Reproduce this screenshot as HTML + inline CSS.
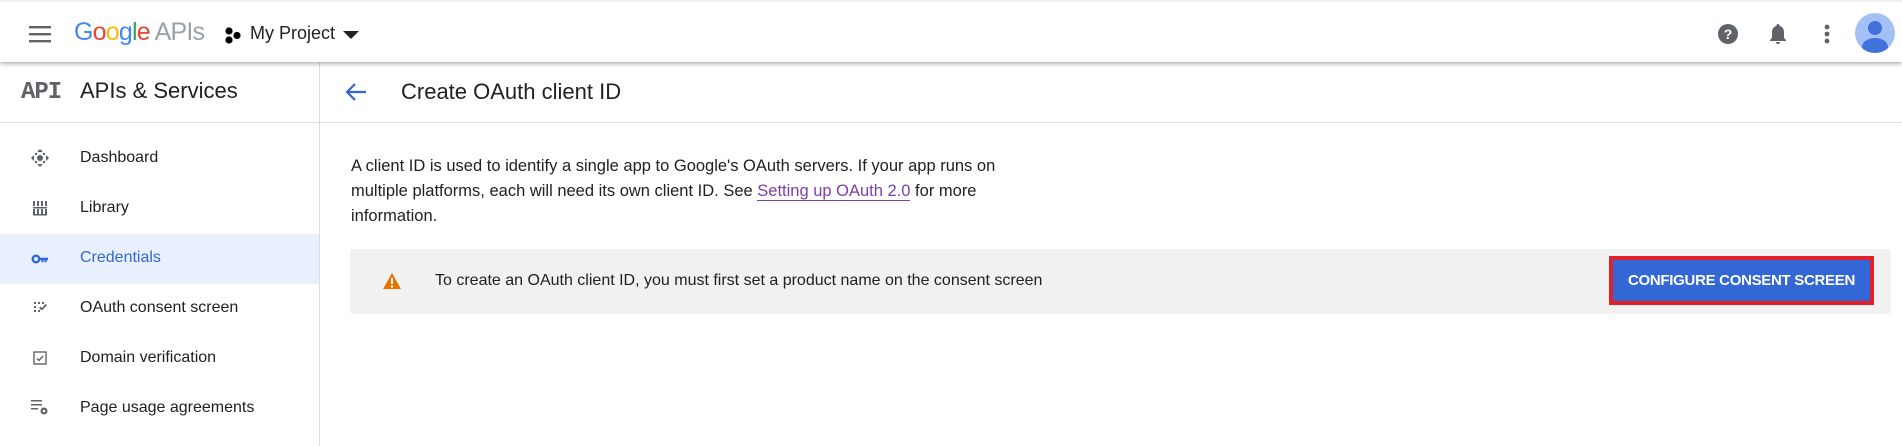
<!DOCTYPE html>
<html><head><meta charset="utf-8"><style>
*{margin:0;padding:0;box-sizing:border-box}
body{width:1902px;height:446px;overflow:hidden;background:#fff;font-family:"Liberation Sans",Arial,sans-serif;color:#202124;position:relative}
.abs{position:absolute}
.hdr{left:0;top:0;width:1902px;height:62px;background:#fff;box-shadow:0 2px 4px rgba(0,0,0,.3);z-index:5;border-top:2px solid #f1f1f1}
.nav{font-size:16px;left:80px;line-height:20px}
.ic{left:30px;width:20px;height:20px}
</style></head><body>
<div class="abs hdr">
  <svg class="abs" style="left:28px;top:22px" width="24" height="20" viewBox="0 0 24 20"><rect x="1" y="2" width="22" height="2.4" fill="#5f6368"/><rect x="1" y="9" width="22" height="2.4" fill="#5f6368"/><rect x="1" y="16" width="22" height="2.4" fill="#5f6368"/></svg>
  <div class="abs" style="left:74px;top:15px;font-size:25px;letter-spacing:-0.8px;line-height:30px"><span style="color:#4285f4">G</span><span style="color:#ea4335">o</span><span style="color:#fbbc05">o</span><span style="color:#4285f4">g</span><span style="color:#34a853">l</span><span style="color:#ea4335">e</span><span style="color:#9aa0a6"> APIs</span></div>
  <svg class="abs" style="left:224px;top:24px" width="20" height="20" viewBox="0 0 20 20"><circle cx="5" cy="5" r="3.6" fill="#000"/><circle cx="5" cy="14" r="3.6" fill="#000"/><circle cx="13" cy="9.5" r="3.6" fill="#000"/></svg>
  <div class="abs" style="left:250px;top:21px;font-size:18px;color:#202124">My Project</div>
  <svg class="abs" style="left:342px;top:28px" width="18" height="10"><path d="M1 1h16l-8 8z" fill="#202124"/></svg>
  <svg class="abs" style="left:1717px;top:21px" width="22" height="22" viewBox="0 0 22 22"><circle cx="11" cy="11" r="10" fill="#5f6368"/><text x="11" y="16" font-size="14" font-weight="bold" fill="#fff" text-anchor="middle" font-family="Liberation Sans">?</text></svg>
  <svg class="abs" style="left:1768px;top:20px" width="20" height="24" viewBox="0 0 20 24"><path d="M10 2c-1 0-1.5.6-1.5 1.4v.5C5.6 4.7 4 7.2 4 10v6l-2 2v1h16v-1l-2-2v-6c0-2.8-1.6-5.3-4.5-6.1v-.5C11.5 2.6 11 2 10 2zM8 20a2 2 0 004 0z" fill="#5f6368"/></svg>
  <svg class="abs" style="left:1819px;top:21px" width="16" height="22"><circle cx="8" cy="4" r="2.4" fill="#5f6368"/><circle cx="8" cy="11" r="2.4" fill="#5f6368"/><circle cx="8" cy="18" r="2.4" fill="#5f6368"/></svg>
  <svg class="abs" style="left:1855px;top:11px" width="40" height="40" viewBox="0 0 40 40"><defs><clipPath id="c"><circle cx="20" cy="20" r="20"/></clipPath></defs><circle cx="20" cy="20" r="20" fill="#a3c1f7"/><g clip-path="url(#c)" fill="#3f73db"><circle cx="20" cy="15" r="7"/><ellipse cx="20" cy="34" rx="13" ry="9"/></g></svg>
</div>

<div class="abs" style="left:319px;top:62px;width:1px;height:384px;background:#dadce0"></div>
<div class="abs" style="left:0;top:122px;width:1902px;height:1px;background:#dadce0"></div>
<div class="abs" style="left:21px;top:79px;font-family:'Liberation Mono',monospace;font-weight:bold;font-size:24px;color:#5f6368;letter-spacing:-1px">API</div>
<div class="abs" style="left:80px;top:78px;font-size:22px">APIs &amp; Services</div>

<svg class="abs ic" style="top:148px" viewBox="0 0 20 20" fill="#5f6368"><path d="M10 1l3 3h-6zM10 19l3-3h-6zM1 10l3-3v6zM19 10l-3-3v6z"/><circle cx="10" cy="10" r="3"/><circle cx="6" cy="6" r="1.2"/><circle cx="14" cy="6" r="1.2"/><circle cx="6" cy="14" r="1.2"/><circle cx="14" cy="14" r="1.2"/></svg>
<div class="abs nav" style="top:148px">Dashboard</div>
<svg class="abs ic" style="top:198px" viewBox="0 0 20 20" fill="#5f6368"><rect x="3" y="3" width="2" height="5"/><rect x="7" y="3" width="2" height="5"/><rect x="11" y="3" width="2" height="5"/><rect x="15" y="3" width="2" height="5"/><rect x="3" y="9" width="14" height="1.5"/><rect x="3" y="11" width="2" height="5"/><rect x="7" y="11" width="2" height="5"/><rect x="11" y="11" width="2" height="5"/><rect x="15" y="11" width="2" height="5"/><rect x="3" y="16" width="14" height="1.5"/></svg>
<div class="abs nav" style="top:198px">Library</div>
<div class="abs" style="left:0;top:234px;width:319px;height:50px;background:#e8f0fe"></div>
<svg class="abs ic" style="top:249px" viewBox="0 0 20 20"><circle cx="6" cy="10" r="3.3" fill="none" stroke="#3367d6" stroke-width="2.4"/><path d="M9 8.8h9v2.4h-1.5v2h-2v-2h-1v2h-2v-2H9z" fill="#3367d6"/></svg>
<div class="abs nav" style="top:248px;color:#3367d6">Credentials</div>
<svg class="abs ic" style="top:298px" viewBox="0 0 20 20" fill="#5f6368"><rect x="4" y="4" width="2" height="2"/><rect x="8" y="4" width="2" height="2"/><rect x="12" y="4" width="2" height="2"/><rect x="4" y="8" width="2" height="2"/><rect x="4" y="12" width="2" height="2"/><rect x="8" y="12" width="2" height="2"/><path d="M9 10l1.5-1.5L12 10l3.5-4L17 7l-5 5.5z"/></svg>
<div class="abs nav" style="top:298px">OAuth consent screen</div>
<svg class="abs ic" style="top:348px" viewBox="0 0 20 20"><rect x="4" y="4" width="12" height="12" fill="none" stroke="#5f6368" stroke-width="1.4"/><path d="M7 10.5l2 2 4-4.5" fill="none" stroke="#5f6368" stroke-width="1.4"/></svg>
<div class="abs nav" style="top:348px">Domain verification</div>
<svg class="abs ic" style="top:398px" viewBox="0 0 20 20" fill="#5f6368"><rect x="1" y="2" width="11" height="1.5"/><rect x="1" y="6" width="11" height="1.5"/><rect x="1" y="10" width="7" height="1.5"/><circle cx="14" cy="13" r="3.5"/><circle cx="14" cy="13" r="1.3" fill="#fff"/></svg>
<div class="abs nav" style="top:398px">Page usage agreements</div>

<svg class="abs" style="left:344px;top:81px" width="24" height="22" viewBox="0 0 24 22"><path d="M22 11H4M11 3l-8 8 8 8" fill="none" stroke="#3367d6" stroke-width="2.2"/></svg>
<div class="abs" style="left:401px;top:79px;font-size:22px">Create OAuth client ID</div>
<div class="abs" style="left:351px;top:154px;font-size:16.5px;line-height:25px;color:#202124">A client ID is used to identify a single app to Google's OAuth servers. If your app runs on<br>multiple platforms, each will need its own client ID. See <span style="color:#7b3fa6;border-bottom:1px solid #7b3fa6">Setting up OAuth 2.0</span> for more<br>information.</div>

<div class="abs" style="left:350px;top:249px;width:1541px;height:65px;background:#f1f1f1;border-radius:4px"></div>
<svg class="abs" style="left:382px;top:272px" width="20" height="18" viewBox="0 0 20 18"><path d="M10 1l9 16H1z" fill="#e37400"/><rect x="9" y="6" width="2" height="6" fill="#fff"/><rect x="9" y="13.5" width="2" height="2" fill="#fff"/></svg>
<div class="abs" style="left:435px;top:272px;font-size:16px">To create an OAuth client ID, you must first set a product name on the consent screen</div>
<div class="abs" style="left:1609px;top:256px;width:265px;height:49px;border:4px solid #e3202a;background:#3367d6;color:#fff;font-weight:bold;font-size:15px;display:flex;align-items:center;justify-content:center;letter-spacing:-0.3px">CONFIGURE CONSENT SCREEN</div>
</body></html>
